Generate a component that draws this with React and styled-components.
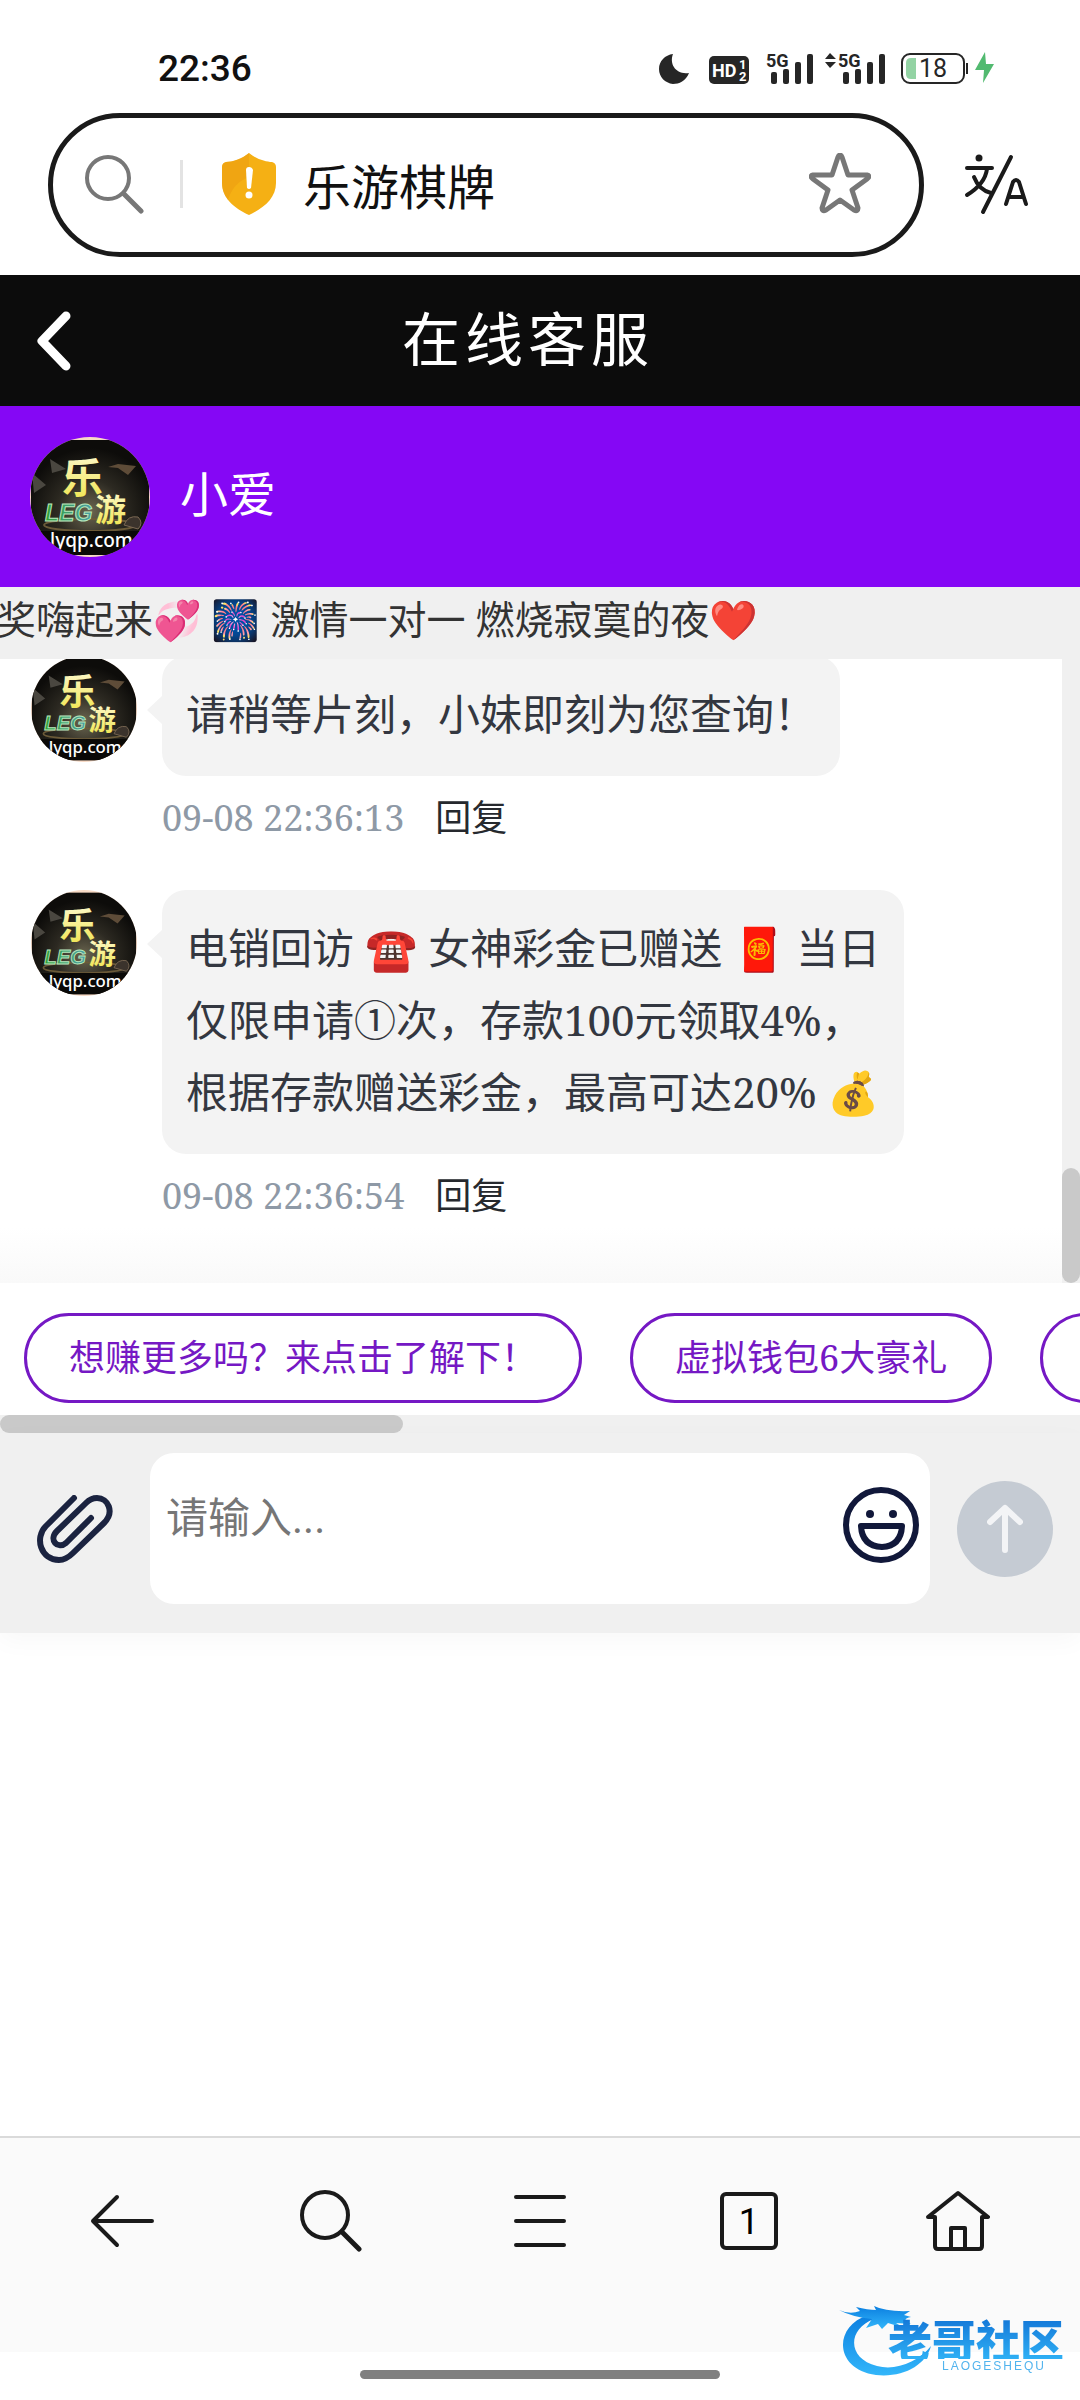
import React from 'react';
import styled, { createGlobalStyle } from 'styled-components';

const sans = '"Noto Sans CJK SC", "Noto Color Emoji", sans-serif';
const serif = '"Noto Serif", "Liberation Serif", "Noto Sans CJK SC", "Noto Color Emoji", serif';

const Global = createGlobalStyle`
  *, *::before, *::after { box-sizing: border-box; }
  body { margin: 0; background: #fff; font-family: ${sans}; }
  button { font: inherit; color: inherit; border: 0; padding: 0; background: none; cursor: pointer; }
  svg { display: block; flex: none; }
`;

const Page = styled.div`
  min-height: 100vh;
  display: flex;
  flex-direction: column;
  overflow: hidden;
`;

const StatusBar = styled.div`
  height: 113px;
  padding: 24px 83px 0 158px;
  display: flex;
  align-items: center;
  justify-content: space-between;
`;
const Clock = styled.time`
  font: 500 37px/44px Roboto, sans-serif;
  color: #111;
`;

const BrowserBar = styled.div`
  display: flex;
  align-items: center;
  padding: 0 48px 18px;
  gap: 36px;
`;
const AddressBox = styled.div`
  flex: 1;
  height: 144px;
  border: 5px solid #1a1a1a;
  border-radius: 72px;
  display: flex;
  align-items: center;
  padding: 0 48px 2px 31px;
`;
const Divider = styled.span`
  width: 3px;
  height: 48px;
  margin: 0 38px 0 36px;
  background: #e3e3e3;
`;
const SiteName = styled.span`
  flex: 1;
  margin-left: 26px;
  font-size: 48px;
  line-height: 70px;
  color: #111;
`;

const TitleBar = styled.header`
  height: 131px;
  padding-bottom: 2px;
  background: #0c0c0c;
  color: #fff;
  display: grid;
  grid-template-columns: 96px 1fr 120px;
  align-items: center;
`;
const BackButton = styled.button`
  padding: 2px 0 0 34px;
`;
const Title = styled.h1`
  margin: 0;
  padding-bottom: 8px;
  text-align: center;
  font-size: 58px;
  font-weight: 400;
  line-height: 84px;
  letter-spacing: 5px;
`;

const AgentBar = styled.section`
  background: #8507f5;
  padding: 31px 30px 30px;
  display: flex;
  align-items: center;
  gap: 30px;
  color: #fff;
`;
const AgentName = styled.span`
  padding-bottom: 12px;
  font-size: 48px;
  line-height: 72px;
`;

const Marquee = styled.div`
  height: 72px;
  margin-left: -3px;
  background: #f0f0f0;
  color: #333;
  font-family: ${serif};
  font-size: 39px;
  line-height: 64px;
  white-space: nowrap;
`;

const ChatArea = styled.div`
  display: flex;
  height: 624px;
`;
const Thread = styled.main`
  flex: 1;
  overflow: hidden;
  display: flex;
  flex-direction: column;
  justify-content: flex-end;
  gap: 48px;
  padding: 0 31px 63px;
  background: linear-gradient(to top, #f9f9f9, #fff 56px);
`;
const Track = styled.div`
  background: #f0f0f0;
  display: flex;
  flex-direction: ${(p) => (p.$vertical ? 'column' : 'row')};
  justify-content: ${(p) => (p.$vertical ? 'flex-end' : 'flex-start')};
  ${(p) => (p.$vertical ? 'width: 18px;' : 'height: 18px;')}
`;
const Thumb = styled.div`
  background: #c9c9c9;
  border-radius: 9px;
  ${(p) => (p.$vertical ? 'height: 115px;' : 'width: 403px;')}
`;

const Row = styled.article`
  display: flex;
  align-items: flex-start;
  gap: 25px;
`;
const Bubble = styled.div`
  position: relative;
  width: fit-content;
  padding: 22px 24px 26px;
  border-radius: 24px;
  background: #f3f3f3;
  color: #333740;
  font-family: ${serif};
  font-size: 42px;
  line-height: 72px;
  white-space: nowrap;
  &::before {
    content: '';
    position: absolute;
    left: -15px;
    top: 40px;
    border: 14px solid transparent;
    border-left: 0;
    border-right: 15px solid #f3f3f3;
  }
`;
const Line = styled.p`
  margin: 0;
  height: 72px;
`;
const Meta = styled.div`
  margin-top: 12px;
  display: flex;
  align-items: baseline;
  gap: 31px;
  height: 54px;
  line-height: 54px;
`;
const Stamp = styled.time`
  font-family: ${serif};
  font-size: 36px;
  color: #8e99a6;
`;
const Reply = styled.button`
  font-size: 36px;
  line-height: 54px;
  color: #26292e;
`;

const Chips = styled.nav`
  display: flex;
  gap: 48px;
  padding: 30px 24px 12px;
  overflow: hidden;
  background: #fff;
`;
const Chip = styled.button`
  flex: none;
  height: 90px;
  padding: 0 42px;
  border: 3px solid #7518c4;
  border-radius: 45px;
  color: #7518c4;
  font-size: 36px;
  line-height: 54px;
  font-family: ${serif};
  white-space: nowrap;
`;

const Composer = styled.form`
  display: grid;
  grid-template-columns: 150px 1fr 150px;
  align-items: center;
  justify-items: center;
  padding: 20px 0 29px;
  background: #f0f0f0;
  box-shadow: 0 8px 24px rgba(0, 0, 0, 0.03);
`;
const InputBox = styled.div`
  width: 100%;
  height: 151px;
  padding: 0 10px 6px 16px;
  border-radius: 24px;
  background: #fff;
  display: flex;
  align-items: center;
`;
const Field = styled.input`
  flex: 1;
  min-width: 0;
  border: 0;
  padding: 0 0 14px;
  outline: 0;
  background: none;
  font-family: Roboto, ${sans};
  font-size: 42px;
  line-height: 63px;
  &::placeholder { color: #767676; opacity: 1; }
`;
const SendButton = styled.button`
  width: 96px;
  height: 96px;
  border-radius: 50%;
  background: #c5cbd3;
  display: grid;
  place-items: center;
`;

const Filler = styled.div`
  flex: 1;
`;
const Toolbar = styled.footer`
  height: 216px;
  padding: 45px 18px 0;
  border-top: 2px solid #dadada;
  background: #fafafa;
  display: grid;
  grid-template-columns: repeat(5, 1fr);
  align-items: start;
`;
const ToolButton = styled.button`
  height: 76px;
  display: grid;
  place-items: center;
`;
const TabCount = styled.span`
  width: 58px;
  height: 58px;
  border: 4px solid #1a1a1a;
  border-radius: 6px;
  font: 400 36px/52px Roboto, sans-serif;
  text-align: center;
`;
const HomeIndicator = styled.div`
  height: 48px;
  display: flex;
  justify-content: center;
  padding-top: 18px;
  &::before {
    content: '';
    width: 360px;
    height: 9px;
    border-radius: 5px;
    background: #808080;
  }
`;
const Watermark = styled.div`
  position: fixed;
  right: 16px;
  bottom: 20px;
  width: 226px;
  height: 78px;
`;
const WatermarkText = styled.div`
  position: absolute;
  right: 0;
  top: 17px;
  text-align: right;
`;
const WatermarkName = styled.div`
  font-size: 44px;
  font-weight: 900;
  line-height: 40px;
  background: linear-gradient(#1478d8, #2fb0f5);
  background-clip: text;
  color: transparent;
`;
const WatermarkLatin = styled.div`
  padding-right: 18px;
  font: 12px/14px "Liberation Sans", sans-serif;
  letter-spacing: 2px;
  color: #52b4ee;
`;

function StatusIcons() {
  const bars = (x) => (
    <g>
      <rect x={x} y="22" width="6" height="12" rx="2" />
      <rect x={x + 12} y="19" width="6" height="15" rx="2" />
      <rect x={x + 24} y="12" width="6" height="22" rx="2" />
      <rect x={x + 36} y="4" width="6" height="30" rx="2" />
    </g>
  );
  return (
    <svg width="338" height="38" viewBox="0 0 338 38" fill="#262626" fontFamily="Roboto, sans-serif" fontWeight="700">
      <path d="M14 4C10 14 17 25 30 23C27 31 20 34 14 34C6 33 0 27 0 19C0 11 6 5 14 4Z" />
      <rect x="50" y="6" width="40" height="28" rx="5" />
      <g fill="#fff">
        <text x="53" y="27" fontSize="18">HD</text>
        <text x="80" y="19" fontSize="13">1</text>
        <text x="80" y="31" fontSize="13">2</text>
      </g>
      {bars(112)}
      <text x="107" y="17" fontSize="18">5G</text>
      {bars(184)}
      <text x="179" y="17" fontSize="18">5G</text>
      <path d="M171 3L177 9H166ZM171 18L177 12H166Z" />
      <rect x="243" y="4" width="62" height="29" rx="8" fill="none" stroke="#262626" strokeWidth="2" />
      <path d="M252 8H257V29H252Q247 29 247 24V13Q247 8 252 8Z" fill="#93d3a4" />
      <text x="260" y="27" fontSize="25" fontWeight="400">18</text>
      <rect x="307" y="13" width="2" height="11" />
      <path d="M326 2L316 20H325L324 33L335 14H327Z" fill="#52ba70" />
    </svg>
  );
}

function Avatar({ size }) {
  return (
    <svg width={size} height={size} viewBox="0 0 120 120" role="img" aria-label="乐游">
      <defs>
        <clipPath id={'round' + size}><circle cx="60" cy="60" r="60" /></clipPath>
        <radialGradient id={'glow' + size} cx="50%" cy="62%" r="55%">
          <stop offset="0" stopColor="#6b6650" />
          <stop offset="0.5" stopColor="#2d2a22" />
          <stop offset="1" stopColor="#0d0c0a" />
        </radialGradient>
        <linearGradient id={'gold' + size} x1="0" y1="0" x2="0" y2="1">
          <stop offset="0" stopColor="#fffbe0" />
          <stop offset="1" stopColor="#efe445" />
        </linearGradient>
        <linearGradient id={'leg' + size}>
          <stop offset="0" stopColor="#2f9e35" />
          <stop offset="1" stopColor="#4b9fa8" />
        </linearGradient>
      </defs>
      <g clipPath={`url(#round${size})`}>
        <rect width="120" height="120" fill="#f7d9c4" />
        <rect x="1" y="3" width="118" height="115" fill={`url(#glow${size})`} />
        <path d="M20 22L36 32L22 36ZM2 36L16 48L4 56Z" fill="#4a4740" />
        <path d="M78 30L88 27L106 29L98 38L88 31Z" fill="#5e4c38" />
        <ellipse cx="60" cy="88" rx="46" ry="6" fill="none" stroke="#6b5a38" strokeWidth="2" />
        <path d="M94 88Q98 78 108 80Q114 86 108 92Z" fill="#3b332c" stroke="#7c6955" strokeWidth="1" />
        <g fontFamily='"Noto Sans CJK SC", sans-serif' fontWeight="700" fill={`url(#gold${size})`}>
          <text x="32" y="56" fontSize="41">乐</text>
          <text x="65" y="84" fontSize="31">游</text>
        </g>
        <text x="15" y="84" fontSize="23" fontStyle="italic" fontWeight="700" fontFamily='"Liberation Sans", sans-serif' fill={`url(#leg${size})`} stroke="#b9e8bd" strokeWidth="1">LEG</text>
        <path d="M2 94H118V118H2Z" fill="#0a0907" />
        <text x="20" y="110" fontSize="19" fontFamily='"Noto Sans", sans-serif' fontWeight="500" fill="#fff">lyqp.com</text>
      </g>
    </svg>
  );
}

function Message({ stamp, children }) {
  return (
    <Row>
      <Avatar size={106} />
      <div>
        <Bubble>{children}</Bubble>
        <Meta>
          <Stamp>{stamp}</Stamp>
          <Reply type="button">回复</Reply>
        </Meta>
      </div>
    </Row>
  );
}

export default function App() {
  return (
    <>
      <Global />
      <Page>
        <StatusBar>
          <Clock>22:36</Clock>
          <StatusIcons />
        </StatusBar>

        <BrowserBar>
          <AddressBox>
            <svg width="60" height="60" viewBox="0 0 60 60" fill="none" stroke="#777" strokeWidth="4" strokeLinecap="round">
              <circle cx="24" cy="24" r="21" />
              <path d="M40 40L57 57" strokeWidth="5" />
            </svg>
            <Divider />
            <svg width="56" height="62" viewBox="0 0 56 62">
              <path d="M28 0C35 6 45 9 51 9Q55 10 55 14V30C55 45 43 55 28 62C13 55 1 45 1 30V14Q1 10 5 9C11 9 21 6 28 0Z" fill="#f5b014" />
              <path d="M28 0C21 6 11 9 5 9Q1 10 1 14V30Q1 39 7 47Q12 30 28 24Z" fill="#ed9f10" opacity="0.6" />
              <path d="M25 17Q25 14 28 14T32 17L30 35Q28 37 26 35Z" fill="#fff" />
              <circle cx="28" cy="42" r="3.5" fill="#fff" />
            </svg>
            <SiteName>乐游棋牌</SiteName>
            <svg width="62" height="62" viewBox="0 0 62 62" fill="none" stroke="#777" strokeWidth="5" strokeLinejoin="round">
              <path d="M29 4Q31 0 33 4L39 22L58 22Q62 23 58 26L43 37L49 55Q49 59 45 57L31 47L17 57Q13 59 13 55L19 37L4 26Q0 23 4 22L23 22Z" />
            </svg>
          </AddressBox>
          <svg width="72" height="62" viewBox="0 0 72 62" fill="none" stroke="#1a1a1a" strokeWidth="4" strokeLinecap="round" strokeLinejoin="round">
            <circle cx="19" cy="4" r="3.5" fill="#1a1a1a" stroke="none" />
            <path d="M7 14H32M27 15Q25 30 7 41M14 23Q19 36 31 39M51 3L23 58" />
            <path d="M46 50L53 28Q56 24 59 28L66 50M49 43H63" />
          </svg>
        </BrowserBar>

        <TitleBar>
          <BackButton type="button" aria-label="返回">
            <svg width="40" height="60" viewBox="0 0 40 60" fill="none" stroke="#fff" strokeWidth="9" strokeLinecap="round" strokeLinejoin="round">
              <path d="M32 5L8 30L32 55" />
            </svg>
          </BackButton>
          <Title>在线客服</Title>
        </TitleBar>

        <AgentBar>
          <Avatar size={120} />
          <AgentName>小爱</AgentName>
        </AgentBar>

        <Marquee>奖嗨起来💞 🎆 激情一对一 燃烧寂寞的夜❤️</Marquee>

        <ChatArea>
          <Thread>
            <Message stamp="09-08 22:36:13">
              <Line>请稍等片刻，小妹即刻为您查询！</Line>
            </Message>
            <Message stamp="09-08 22:36:54">
              <Line>电销回访 ☎️ 女神彩金已赠送 🧧 当日</Line>
              <Line>仅限申请①次，存款100元领取4%，</Line>
              <Line>根据存款赠送彩金，最高可达20% 💰</Line>
            </Message>
          </Thread>
          <Track $vertical><Thumb $vertical /></Track>
        </ChatArea>

        <Chips>
          <Chip type="button">想赚更多吗？来点击了解下！</Chip>
          <Chip type="button">虚拟钱包6大豪礼</Chip>
          <Chip type="button" aria-label="更多" />
        </Chips>
        <Track><Thumb /></Track>

        <Composer onSubmit={(e) => e.preventDefault()}>
          <button type="button" aria-label="附件">
            <svg width="76" height="68" viewBox="0 0 76 68" fill="none" stroke="#1b2340" strokeWidth="6" strokeLinecap="round" strokeLinejoin="round">
              <path d="M37 3L9 31C-3 43 4 65 22 65C28 65 32 62 36 58L67 28C78 17 71 3 60 3C55 3 52 5 49 8L20 36C11 45 21 55 29 48L54 23" />
            </svg>
          </button>
          <InputBox>
            <Field aria-label="消息" placeholder="请输入..." />
            <button type="button" aria-label="表情">
              <svg width="78" height="78" viewBox="0 0 78 78" fill="none" stroke="#11183a" strokeWidth="5" strokeLinejoin="round">
                <circle cx="39" cy="38" r="35" strokeWidth="6" />
                <path d="M19 39H60Q59 59 40 60Q20 59 19 39Z" strokeWidth="6" />
                <circle cx="28" cy="27" r="4" fill="#11183a" stroke="none" />
                <circle cx="51" cy="27" r="4" fill="#11183a" stroke="none" />
              </svg>
            </button>
          </InputBox>
          <SendButton type="submit" aria-label="发送">
            <svg width="36" height="50" viewBox="0 0 36 50" fill="none" stroke="#f3f4f6" strokeWidth="6" strokeLinecap="round" strokeLinejoin="round">
              <path d="M18 46V4M3 18L18 4L33 18" />
            </svg>
          </SendButton>
        </Composer>

        <Filler />

        <Toolbar>
          <ToolButton aria-label="后退">
            <svg width="64" height="54" viewBox="0 0 64 54" fill="none" stroke="#1a1a1a" strokeWidth="4" strokeLinecap="round" strokeLinejoin="round">
              <path d="M62 27H3M27 3L3 27L27 51" />
            </svg>
          </ToolButton>
          <ToolButton aria-label="搜索">
            <svg width="62" height="62" viewBox="0 0 62 62" fill="none" stroke="#1a1a1a" strokeWidth="4" strokeLinecap="round">
              <circle cx="25" cy="25" r="23" />
              <path d="M42 42L59 59" strokeWidth="5" />
            </svg>
          </ToolButton>
          <ToolButton aria-label="菜单">
            <svg width="52" height="52" viewBox="0 0 52 52" fill="none" stroke="#1a1a1a" strokeWidth="4" strokeLinecap="round">
              <path d="M2 2H50M2 26H50M2 50H50" />
            </svg>
          </ToolButton>
          <ToolButton aria-label="标签页"><TabCount>1</TabCount></ToolButton>
          <ToolButton aria-label="主页">
            <svg width="64" height="62" viewBox="0 0 64 62" fill="none" stroke="#1a1a1a" strokeWidth="4" strokeLinejoin="round" strokeLinecap="round">
              <path d="M2 27L32 3L62 27H56V56Q56 59 53 59H12Q9 59 9 56V27ZM25 59V38H39V59" />
            </svg>
          </ToolButton>
        </Toolbar>
        <HomeIndicator />
      </Page>

      <Watermark>
        <svg width="100" height="78" viewBox="0 0 100 78">
          <defs>
            <linearGradient id="dragon" x1="0" y1="0" x2="0" y2="1">
              <stop offset="0" stopColor="#0b7fe0" />
              <stop offset="1" stopColor="#33b6fa" />
            </linearGradient>
          </defs>
          <g fill="url(#dragon)">
            <path d="M30 13C-6 25 -3 68 38 73C65 76 88 63 93 44C80 60 58 69 39 64C9 57 9 27 36 17Z" />
            <path d="M1 8Q12 13 22 9L18 5Q30 8 38 8L36 4Q48 10 72 9L66 13L73 15Q62 17 73 22L58 21L66 26L50 21L44 27L40 22L28 26L34 17Q14 15 1 8Z" />
          </g>
        </svg>
        <WatermarkText>
          <WatermarkName>老哥社区</WatermarkName>
          <WatermarkLatin>LAOGESHEQU</WatermarkLatin>
        </WatermarkText>
      </Watermark>
    </>
  );
}
